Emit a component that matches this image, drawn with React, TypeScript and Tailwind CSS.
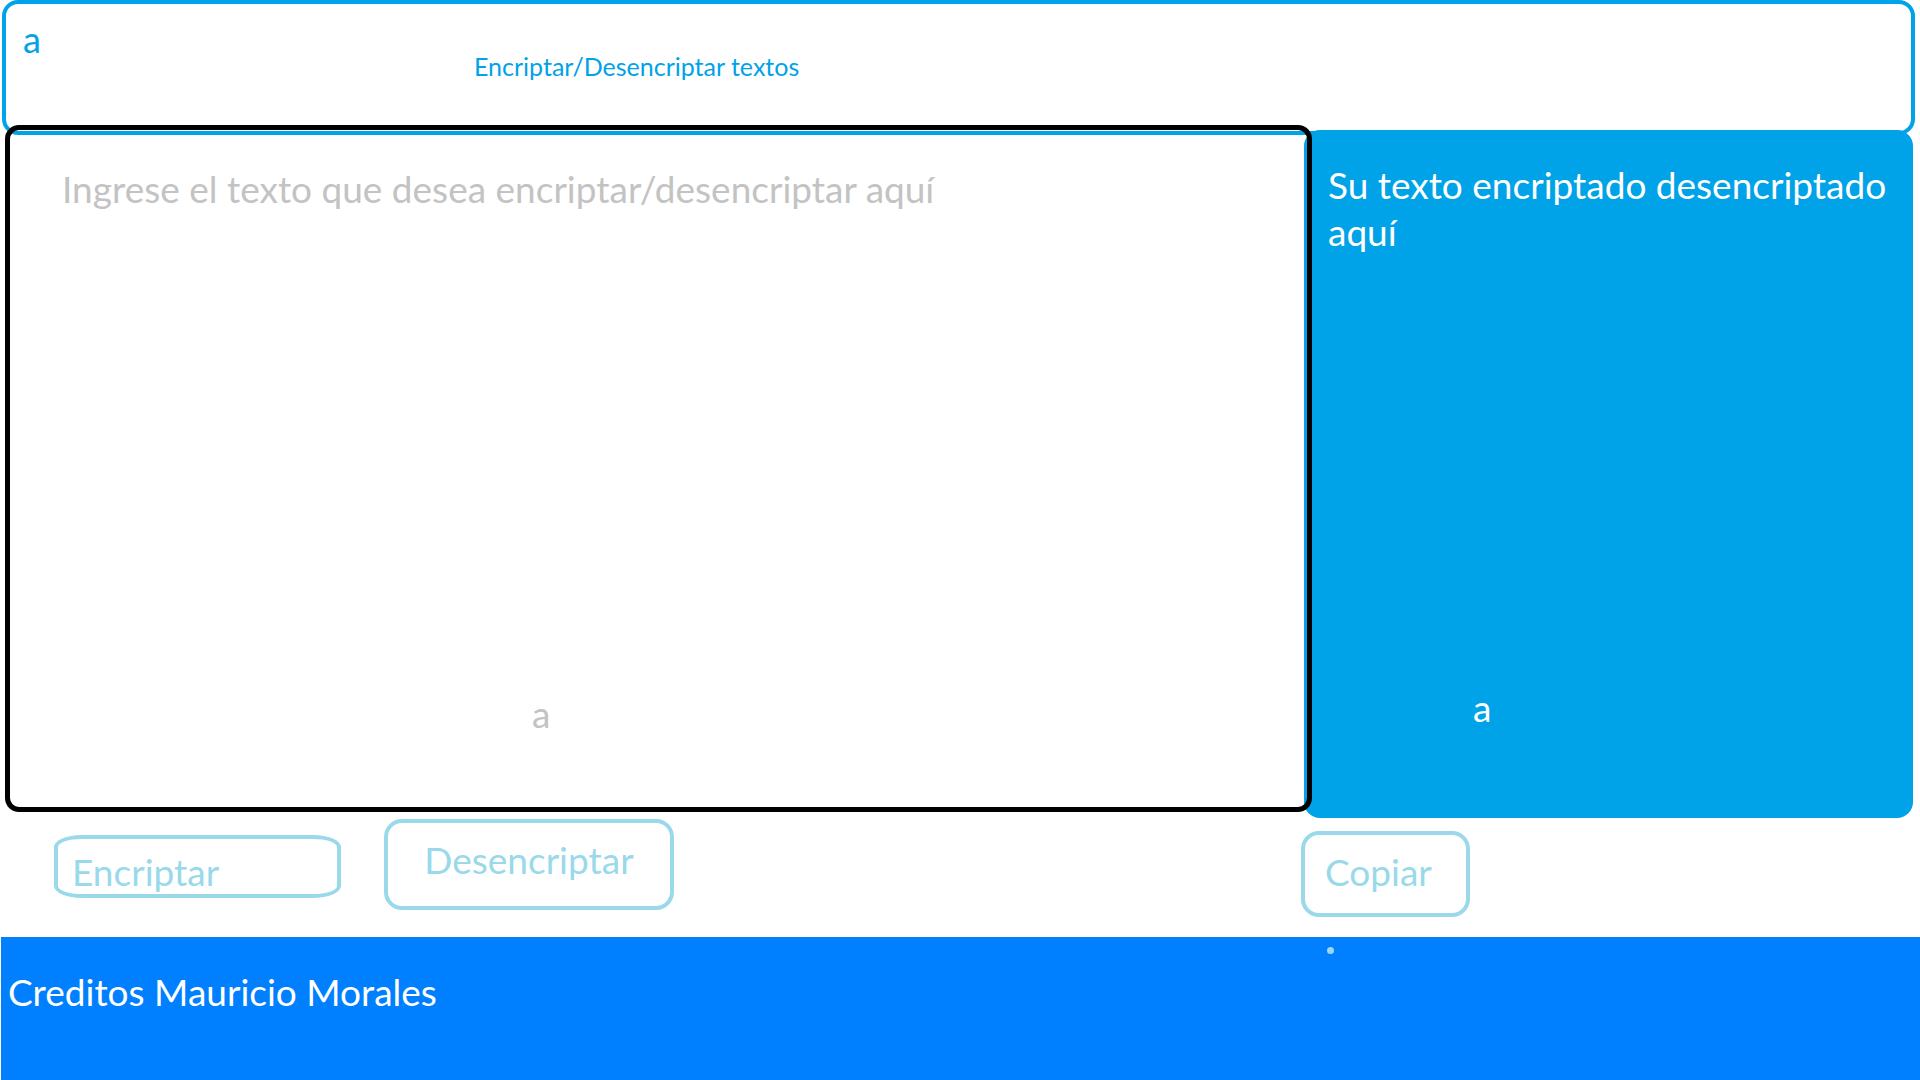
import { FC } from "react";

const font = { fontFamily: "Lato, 'Open Sans', sans-serif" };

const App: FC = () => {
  return (
    <div className="w-[1920px] h-[1080px] bg-white overflow-hidden" style={font}>
      {/* header */}
      <div className="ml-[2px] w-[1913px] h-[135px] border-4 border-[#00a2e8] rounded-[16px] pt-[17px] pl-[17px] flex flex-col">
        <span className="text-[36px] leading-none text-[#00a2e8]">a</span>
        <span className="ml-[451px] mt-[-3px] text-[25px] leading-none text-[#00a2e8]">
          Encriptar/Desencriptar textos
        </span>
      </div>

      {/* main */}
      <div className="flex items-start mt-[-10px]">
        <div className="relative z-10 ml-[5px] w-[1307px] h-[687px] border-[5px] border-black rounded-[14px] pt-[40px] pl-[52px] flex flex-col">
          <span className="text-[37px] leading-none text-[#c3c3c3]">
            Ingrese el texto que desea encriptar/desencriptar aquí
          </span>
          <span className="mt-[488px] ml-[470px] text-[37px] leading-none text-[#c3c3c3]">
            a
          </span>
        </div>
        <div className="ml-[-8px] mt-[5px] w-[609px] h-[688px] bg-[#00a2e8] rounded-[16px] pt-[31px] pl-[24px] flex flex-col">
          <p className="text-[37px] leading-[47px] text-white">
            Su texto encriptado desencriptado
            <br />
            aquí
          </p>
          <span className="mt-[434px] ml-[145px] text-[37px] leading-none text-white">
            a
          </span>
        </div>
      </div>

      {/* buttons */}
      <div className="h-[119px] flex items-start">
        <button className="ml-[54px] mt-[17px] w-[287px] h-[63px] border-4 border-[#99d9ea] rounded-[28px/12px] pl-[14px] pt-[14px] flex items-start text-[37px] leading-none text-[#99d9ea]">
          Encriptar
        </button>
        <button className="ml-[43px] mt-[1px] w-[290px] h-[91px] border-4 border-[#99d9ea] rounded-[18px] pt-[18px] flex justify-center items-start text-[37px] leading-none text-[#99d9ea]">
          Desencriptar
        </button>
        <button className="ml-[627px] mt-[13px] w-[169px] h-[86px] border-4 border-[#99d9ea] rounded-[18px] pl-[20px] pt-[18px] flex items-start text-[37px] leading-none text-[#99d9ea]">
          Copiar
        </button>
      </div>

      {/* footer */}
      <div className="relative ml-[1px] h-[143px] bg-[#0080ff] pl-[7px] pt-[36px]">
        <span className="text-[37px] leading-none text-white">Creditos Mauricio Morales</span>
        <div className="absolute left-[1326px] top-[10px] w-[7px] h-[7px] rounded-sm bg-[#99d9ea]" />
      </div>
    </div>
  );
};

export default App;
